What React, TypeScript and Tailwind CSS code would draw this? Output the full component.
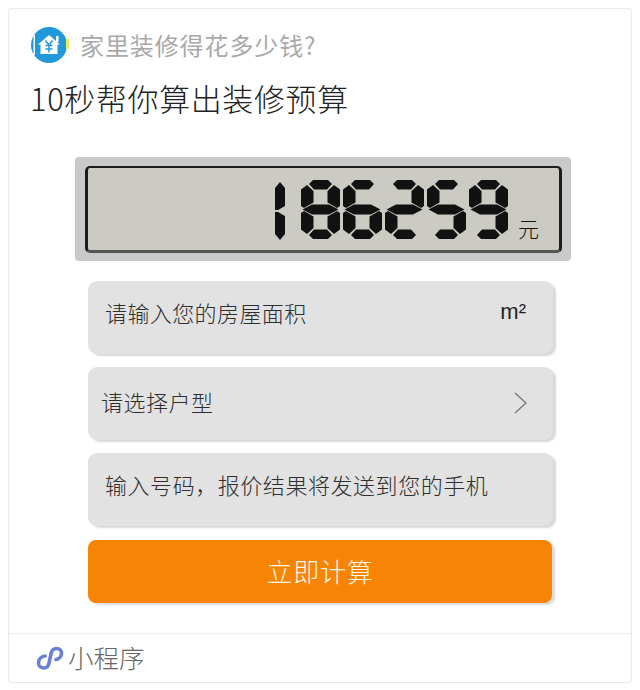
const SEG: Record<string, string> = {
  a: "8,4 12,0 27,0 31,4 26,9.5 13,9.5",
  f: "0,9.5 6,5 12.5,11 12.5,22.5 3,28 0,26",
  b: "39,9.5 33,5 26.5,11 26.5,22.5 36,28 39,26",
  g: "1.5,29.5 11,24.5 28,24.5 37.5,29.5 28,34.5 11,34.5",
  e: "0,33 3,31 12.5,36.5 12.5,48 6,54 0,49.5",
  c: "39,33 36,31 26.5,36.5 26.5,48 33,54 39,49.5",
  d: "8,55 13,49.5 26,49.5 31,55 27,59 12,59",
};
const DIG: Record<string, string> = { "8": "abcdefg", "6": "acdefg", "2": "abdeg", "5": "acdfg", "9": "abcdfg" };

function Digit({ d }: { d: string }) {
  return (
    <svg width="39" height="59" viewBox="0 0 39 59" className="block">
      {DIG[d].split("").map((s) => (
        <polygon key={s} points={SEG[s]} fill="#111" />
      ))}
    </svg>
  );
}

function One() {
  return (
    <svg width="12" height="58" viewBox="0 0 12 58" className="block">
      <polygon points="6,0 11,6 11,24 4,28 1,28 1,6" fill="#111" />
      <polygon points="1,30 4,30 11,34 11,52 6,58 1,52" fill="#111" />
    </svg>
  );
}

function Row({ children, className = "" }: { children: React.ReactNode; className?: string }) {
  return (
    <div className={`flex h-[73px] w-[465px] items-center justify-between rounded-[9px] bg-[#e2e2e2] shadow-[3px_2px_2px_#d8d8d8] ${className}`}>
      {children}
    </div>
  );
}

export default function App() {
  return (
    <div className="h-[690px] w-[640px] bg-white pt-2 text-[#333]" style={{ fontFamily: '"Noto Sans CJK SC", "Noto Sans", sans-serif' }}>
      <div className="mx-2 flex h-[675px] w-[624px] flex-col rounded-[3px] border border-[#e9e9e9]">
        <div className="flex items-center pl-[22px] pt-[16px]">
          <svg width="38" height="40" viewBox="0 0 38 40" className="block shrink-0">
            <circle cx="18" cy="20" r="18" fill="#2198da" />
            <rect x="2.5" y="10" width="1.5" height="20" fill="#fff" />
            <rect x="35" y="14" width="3" height="10" fill="#e6ee5c" />
            <path d="M18 10 L29 19.5 L26.5 19.5 L26.5 29 L9.5 29 L9.5 19.5 L7 19.5 Z" fill="#fff" />
            <rect x="25" y="11" width="2.5" height="6" fill="#fff" />
            <path d="M14.5 15.5 L18 20 L21.5 15.5 M18 20 V27.5 M14.5 20.5 H21.5 M14.5 24 H21.5" stroke="#2198da" strokeWidth="1.5" fill="none" />
          </svg>
          <span className="ml-[11px] text-[24px] leading-[30px] tracking-[0.9px] text-[#a9a9a9]">家里装修得花多少钱?</span>
        </div>
        <div className="pl-[21px] pt-[11px] text-[31px] font-light leading-[44px] tracking-[0.6px] text-[#222]">10秒帮你算出装修预算</div>

        <div className="ml-[66px] mt-[37px] h-[104px] w-[496px] rounded-[4px] bg-[#c9c9c9] pl-[10px] pt-[9px]">
          <div className="relative flex h-[87px] w-[477px] items-start rounded-[5px] border-[3px] border-t-2 border-[#1c1c1c] border-b-[#555] bg-[#cbcac3] pl-[186px] pt-[12px]">
            <div className="mt-[2px] mr-[15px]"><One /></div>
            <div className="flex gap-[3px]">
              {["8", "6", "2", "5", "9"].map((d, i) => (
                <Digit key={i} d={d} />
              ))}
            </div>
            <span className="ml-[10px] mt-[36px] text-[21px] font-light leading-[24px] text-[#111]">元</span>
          </div>
        </div>

        <div className="ml-[79px] mt-[20px] flex flex-col gap-[13px]">
          <Row className="pb-[12px] pl-[17px] pr-[27px]">
            <span className="text-[22px] font-light leading-[30px] tracking-[0.4px] text-[#2e2e2e]">请输入您的房屋面积</span>
            <span className="text-[22px] font-medium leading-[24px] text-[#222]" style={{ fontFamily: '"Liberation Sans", sans-serif' }}>m²</span>
          </Row>
          <Row className="pb-[6px] pl-[13px] pr-[24px]">
            <span className="text-[22px] font-light leading-[30px] tracking-[0.5px] text-[#2e2e2e]">请选择户型</span>
            <svg width="16" height="24" viewBox="0 0 16 24" className="mt-[4px] block">
              <path d="M2 2 L13 12 L2 22" fill="none" stroke="#777" strokeWidth="1.3" />
            </svg>
          </Row>
          <Row className="pb-[12px] pl-[17px]">
            <span className="text-[22px] font-light leading-[30px] tracking-[0.55px] text-[#2e2e2e]">输入号码{"\uFF0C"}报价结果将发送到您的手机</span>
          </Row>
          <div className="mt-[1px] flex h-[63px] w-[464px] items-center justify-center rounded-[8px] bg-[#f78404] pb-[3px] text-[26px] tracking-[0.7px] font-light text-[#fff6ea] shadow-[3px_2px_2px_#dcdcdc]">
            立即计算
          </div>
        </div>

        <div className="mt-[30px] flex flex-1 items-center border-t border-[#f1eef0] pb-[3px] pl-[27px]">
          <svg width="28" height="24" viewBox="0 0 28 24" className="mt-[3px] block shrink-0">
            <path d="M9 10 C5 10.5 2.5 13.5 2.5 17 C2.5 20 5 22 8 22 C11 22 12.5 20 13 17 L15 8 C15.5 5 17.5 2.5 20.5 2.5 C23.5 2.5 25.5 4.5 25.5 7.5 C25.5 10.5 23 13 20 13.5" fill="none" stroke="#6b80d4" strokeWidth="3.6" strokeLinecap="round" />
          </svg>
          <span className="ml-[4px] text-[25.5px] font-light leading-[32px] text-[#666]">小程序</span>
        </div>
      </div>
    </div>
  );
}
